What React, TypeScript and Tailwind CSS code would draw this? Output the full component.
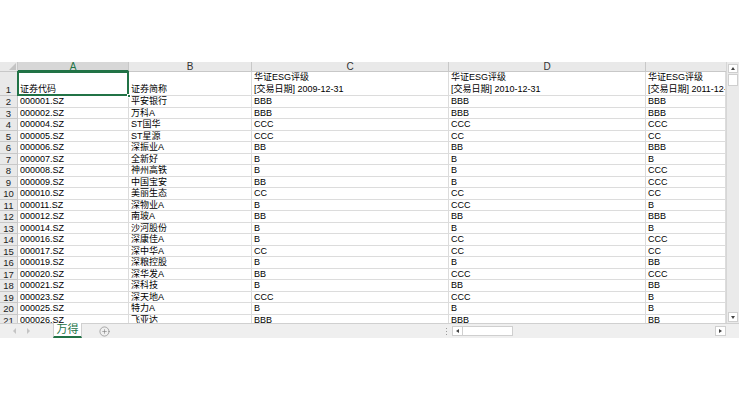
import { CirclePlus } from "lucide-react";

const codes = ["000001.SZ","000002.SZ","000004.SZ","000005.SZ","000006.SZ","000007.SZ","000008.SZ","000009.SZ","000010.SZ","000011.SZ","000012.SZ","000014.SZ","000016.SZ","000017.SZ","000019.SZ","000020.SZ","000021.SZ","000023.SZ","000025.SZ","000026.SZ"];
const names = ["平安银行","万科A","ST国华","ST星源","深振业A","全新好","神州高铁","中国宝安","美丽生态","深物业A","南玻A","沙河股份","深康佳A","深中华A","深粮控股","深华发A","深科技","深天地A","特力A","飞亚达"];
const c09 = ["BBB","BBB","CCC","CCC","BB","B","B","BB","CC","B","BB","B","B","CC","B","BB","B","CCC","B","BBB"];
const c10 = ["BBB","BBB","CCC","CC","BB","B","B","B","CC","CCC","BB","B","CC","CC","B","CCC","BB","CCC","B","BBB"];
const c11 = ["BBB","BBB","CCC","CC","BBB","B","CCC","CCC","CC","B","BBB","B","CCC","CC","BB","CCC","BB","B","B","BB"];

const font = "font-['Liberation_Sans','Noto_Sans_CJK_SC',sans-serif]";

function Cell({ w, children }: { w: string; children?: React.ReactNode }) {
  return (
    <div className={`${w} shrink-0 h-full border-r border-b border-[#dcdcdc] pl-[2px] overflow-hidden whitespace-nowrap leading-[11.5px] text-[9px] text-black`}>
      {children}
    </div>
  );
}

export default function App() {
  return (
    <div className={`w-[740px] h-[400px] bg-white pt-[62px] ${font}`}>
      <div className="flex h-[261px]">
        <div className="w-[726px] overflow-hidden">
          {/* column headers */}
          <div className="flex h-[10px] text-[10px] leading-[10px] text-[#333]">
            <div className="w-[18px] shrink-0 bg-[#e9e9e9] border-r border-b border-[#c8c8c8] relative">
              <div className="absolute right-[1px] bottom-[1px] w-0 h-0 border-l-[7px] border-l-transparent border-b-[7px] border-b-[#c4c4c4]" />
            </div>
            <div className="w-[111px] shrink-0 bg-[#d7d7d7] border-r border-[#c8c8c8] border-b-2 border-b-[#217346] text-center text-[#217346]">A</div>
            <div className="w-[123px] shrink-0 bg-[#e9e9e9] border-r border-b border-[#c8c8c8] text-center">B</div>
            <div className="w-[197px] shrink-0 bg-[#e9e9e9] border-r border-b border-[#c8c8c8] text-center">C</div>
            <div className="w-[197px] shrink-0 bg-[#e9e9e9] border-r border-b border-[#c8c8c8] text-center">D</div>
            <div className="w-[80px] shrink-0 bg-[#e9e9e9] border-b border-[#c8c8c8]" />
          </div>
          {/* row 1 */}
          <div className="flex h-[24px]">
            <div className="w-[18px] shrink-0 bg-[#e9e9e9] border-r border-b border-[#c8c8c8] flex items-end justify-center text-[9.5px] leading-[11.5px] text-[#222]">1</div>
            <div className="w-[111px] shrink-0 h-full relative border-r border-b border-[#dcdcdc] pl-[2px] flex items-end text-[9px] leading-[11.5px] text-black">
              证券代码
              <div className="absolute -left-[1px] -top-[1px] -right-[1px] -bottom-[1px] border-2 border-[#217346]" />
              <div className="absolute -right-[3px] -bottom-[3px] w-[4px] h-[4px] bg-[#217346] border border-white" />
            </div>
            <div className="w-[123px] shrink-0 h-full border-r border-b border-[#dcdcdc] pl-[2px] flex items-end text-[9px] leading-[11.5px] text-black">证券简称</div>
            {["2009-12-31", "2010-12-31", "2011-12-31"].map((d, i) => (
              <div key={d} className={`${i < 2 ? "w-[197px]" : "w-[80px]"} shrink-0 h-full border-r border-b border-[#dcdcdc] pl-[2px] flex flex-col justify-end overflow-hidden whitespace-nowrap text-[9px] leading-[11.5px] text-black`}>
                <div>华证ESG评级</div>
                <div>[交易日期] {d}</div>
              </div>
            ))}
          </div>
          {codes.map((c, i) => (
            <div key={c} className="flex h-[11.5px]">
              <div className="w-[18px] shrink-0 bg-[#e9e9e9] border-r border-b border-[#c8c8c8] text-center text-[9.5px] leading-[11.5px] text-[#222]">{i + 2}</div>
              <Cell w="w-[111px]">{c}</Cell>
              <Cell w="w-[123px]">{names[i]}</Cell>
              <Cell w="w-[197px]">{c09[i]}</Cell>
              <Cell w="w-[197px]">{c10[i]}</Cell>
              <Cell w="w-[80px]">{c11[i]}</Cell>
            </div>
          ))}
        </div>
        {/* vertical scrollbar */}
        <div className="w-[13px] bg-[#eaeaea] border-l border-[#d6d6d6] flex flex-col px-[1px] pt-[2px] pb-[1px] gap-[1px]">
          <div className="h-[9px] bg-white border border-[#cfcfcf] flex items-center justify-center">
            <div className="w-0 h-0 border-l-[2.5px] border-r-[2.5px] border-b-[3px] border-l-transparent border-r-transparent border-b-[#444]" />
          </div>
          <div className="h-[12px] bg-white border border-[#cfcfcf]" />
          <div className="flex-1" />
          <div className="h-[10px] bg-white border border-[#cfcfcf] flex items-center justify-center">
            <div className="w-0 h-0 border-l-[2.5px] border-r-[2.5px] border-t-[3px] border-l-transparent border-r-transparent border-t-[#444]" />
          </div>
        </div>
      </div>
      {/* sheet tabs bar */}
      <div className="w-[739px] h-[15px] bg-[#efefef] border-t border-[#d0d0d0] flex items-stretch">
        <div className="w-[53px] shrink-0 flex items-center pl-[13px] gap-[11px]">
          <div className="w-0 h-0 border-t-[3px] border-b-[3px] border-r-[3px] border-t-transparent border-b-transparent border-r-[#c4c4c4]" />
          <div className="w-0 h-0 border-t-[3px] border-b-[3px] border-l-[3px] border-t-transparent border-b-transparent border-l-[#c4c4c4]" />
        </div>
        <div className="w-[29px] shrink-0 bg-white border-x border-[#d0d0d0] border-b-2 border-b-[#217346] flex items-center justify-center text-[11px] leading-none text-[#217346] -mt-[1px]">万得</div>
        <div className="w-[44px] shrink-0 flex items-center justify-center">
          <CirclePlus size={11} strokeWidth={1.3} color="#7a7a7a" />
        </div>
        <div className="flex-1" />
        <div className="w-[8px] shrink-0 flex flex-col items-center justify-center gap-[2px]">
          <div className="w-[1px] h-[1px] bg-[#9a9a9a]" />
          <div className="w-[1px] h-[1px] bg-[#9a9a9a]" />
          <div className="w-[1px] h-[1px] bg-[#9a9a9a]" />
        </div>
        <div className="w-[275px] shrink-0 flex items-center pl-[1px] ml-[1px]">
          <div className="w-[11px] h-[10px] bg-white border border-[#cfcfcf] flex items-center justify-center">
            <div className="w-0 h-0 border-t-[2.5px] border-b-[2.5px] border-r-[3px] border-t-transparent border-b-transparent border-r-[#444]" />
          </div>
          <div className="w-[50px] h-[10px] bg-white border-y border-r border-[#cfcfcf]" />
          <div className="flex-1" />
          <div className="w-[11px] h-[10px] bg-white border border-[#cfcfcf] flex items-center justify-center">
            <div className="w-0 h-0 border-t-[2.5px] border-b-[2.5px] border-l-[3px] border-t-transparent border-b-transparent border-l-[#444]" />
          </div>
        </div>
        <div className="w-[13px] shrink-0" />
      </div>
    </div>
  );
}
